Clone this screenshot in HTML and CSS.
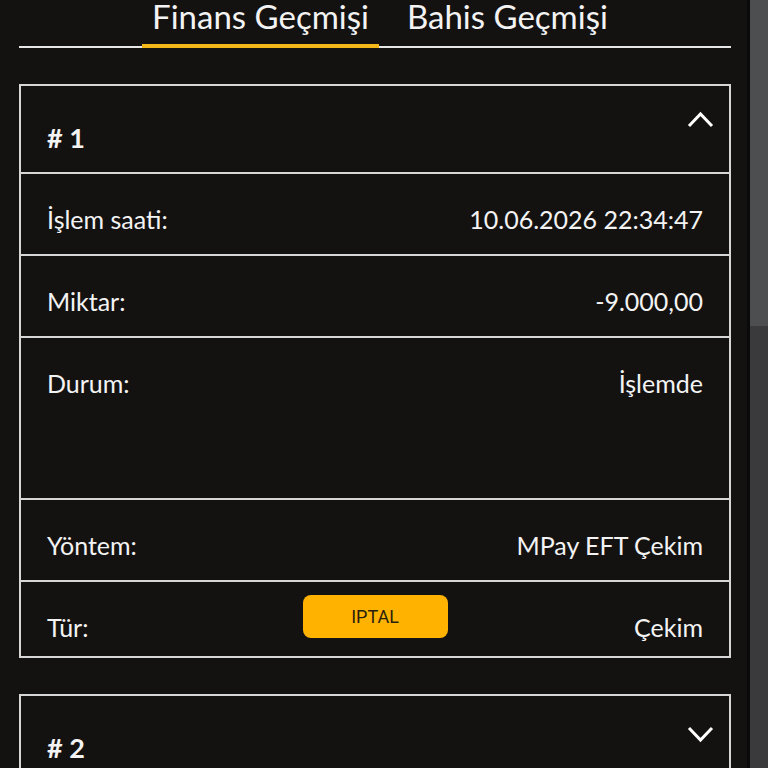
FILE: index.html
```html
<!DOCTYPE html>
<html lang="tr">
  <head>
    <meta charset="UTF-8" />
    <meta name="viewport" content="width=device-width, initial-scale=1.0" />
    <title>Finans Geçmişi</title>
    <link rel="stylesheet" href="styles.css">
  </head>
  <body>
    <div class="app">
      <div class="main">
        <div class="tabs">
          <div class="tab active">Finans Geçmişi</div>
          <div class="tab">Bahis Geçmişi</div>
        </div>

        <div class="card">
          <div class="card-head">
            <span class="num"># 1</span>
            <svg class="chevron up" width="27" height="17" viewBox="0 0 27 17">
              <path d="M2 15 L13.5 3 L25 15" fill="none" stroke="#fff" stroke-width="3" />
            </svg>
          </div>
          <div class="row">
            <span>İşlem saati:</span>
            <span>10.06.2026 22:34:47</span>
          </div>
          <div class="row">
            <span>Miktar:</span>
            <span>-9.000,00</span>
          </div>
          <div class="row tall">
            <span>Durum:</span>
            <span>İşlemde</span>
          </div>
          <div class="row">
            <span>Yöntem:</span>
            <span>MPay EFT Çekim</span>
          </div>
          <div class="row type">
            <span>Tür:</span>
            <button class="cancel">IPTAL</button>
            <span class="end">Çekim</span>
          </div>
        </div>

        <div class="card">
          <div class="card-head">
            <span class="num"># 2</span>
            <svg class="chevron down" width="27" height="17" viewBox="0 0 27 17">
              <path d="M2 2 L13.5 14 L25 2" fill="none" stroke="#fff" stroke-width="3" />
            </svg>
          </div>
        </div>
      </div>
      <div class="scrollbar">
        <div class="thumb"></div>
      </div>
    </div>
  </body>
</html>
```

FILE: styles.css
```css
* {
  box-sizing: border-box;
}
body {
  margin: 0;
  background-color: #141211;
  color: #f3f3f3;
  font-family: Lato, "Noto Sans", sans-serif;
}
.app {
  display: flex;
  height: 768px;
  overflow: hidden;
}
.main {
  flex: 1;
  padding: 0 16px 0 19px;
  border-right: 3px solid #0b0a0a;
}
.tabs {
  display: flex;
  justify-content: center;
  gap: 18px;
  padding-left: 10px;
  border-bottom: 2px solid #e6e6e6;
}
.tab {
  font-size: 33px;
  line-height: 32px;
  padding: 0 10px 12px;
  border-bottom: 4px solid transparent;
  margin-bottom: -2px;
}
.tab.active {
  border-bottom-color: #f4b719;
}
.card {
  margin-top: 36px;
  border: 2px solid #d6d6d6;
}
.card-head {
  display: flex;
  justify-content: space-between;
  align-items: flex-start;
  height: 86px;
  padding: 37px 15px 0 26px;
}
.num {
  font-weight: bold;
  font-size: 27px;
  line-height: 30px;
}
.chevron.up {
  margin-top: -12px;
}
.chevron.down {
  margin-top: -7px;
}
.row {
  display: flex;
  justify-content: space-between;
  align-items: flex-start;
  height: 82px;
  padding: 31px 26px 0 26px;
  border-top: 2px solid #d6d6d6;
  font-size: 25px;
  line-height: 28px;
}
.row.tall {
  height: 162px;
}
.row.type {
  display: grid;
  grid-template-columns: 1fr auto 1fr;
  height: 76px;
  padding-top: 13px;
}
.row.type span {
  margin-top: 18px;
}
.row.type .end {
  justify-self: end;
}
.cancel {
  width: 145px;
  height: 43px;
  border: none;
  border-radius: 8px;
  background-color: #ffb300;
  color: #2a1f0d;
  font-family: Roboto, sans-serif;
  font-size: 18px;
}
.scrollbar {
  width: 18px;
  background-color: #3a3a3c;
}
.thumb {
  height: 326px;
  background-color: #4d4e50;
}
```
